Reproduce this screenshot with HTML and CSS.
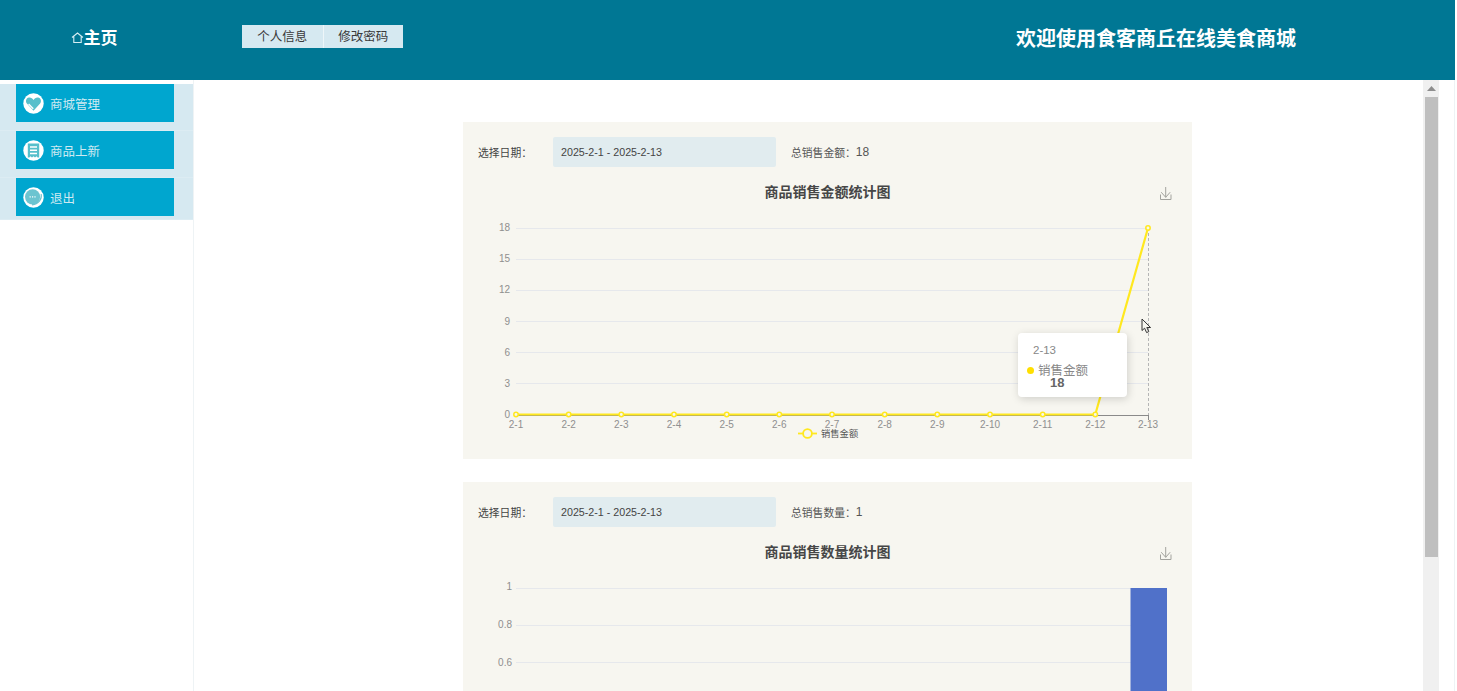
FILE: index.html
```html
<!DOCTYPE html>
<html lang="zh-CN">
<head>
<meta charset="utf-8">
<title>食客商丘在线美食商城</title>
<link rel="stylesheet" href="styles.css">
</head>
<body>
<div class="page">
  <header class="topbar">
    <div class="brand">
      <svg class="home-icon" width="13" height="13" viewBox="0 0 13 13"><path d="M1 6.5 6.5 2 12 6.5M2.8 5.6V11.5H10.2V5.6" fill="none" stroke="#d6eef4" stroke-width="1.1"/></svg>
      <span>主页</span>
    </div>
    <nav class="tabs">
      <a class="tab">个人信息</a>
      <a class="tab">修改密码</a>
    </nav>
    <h1 class="welcome">欢迎使用食客商丘在线美食商城</h1>
  </header>
  <div class="body-row">
    <aside class="sidebar">
      <ul class="menu">
        <li class="menu-row"><a class="menu-item">
          <svg class="menu-icon" width="21" height="21" viewBox="0 0 21 21"><circle cx="10.5" cy="10.5" r="10.2" fill="#fff"/><path d="M10.5 17.8 3.9 10.6C2.2 8.6 3 5 6 4.6 7.9 4.4 9.6 5.4 10.5 7 11.4 5.4 13.1 4.4 15 4.6 18 5 18.8 8.6 17.1 10.6Z" fill="#56bfcb"/><path d="M5.6 11 10.3 15.8" stroke="#fff" stroke-width="1.3"/></svg>
          <span>商城管理</span></a></li>
        <li class="menu-row"><a class="menu-item">
          <svg class="menu-icon" width="21" height="21" viewBox="0 0 21 21"><circle cx="10.5" cy="10.5" r="10.2" fill="#fff"/><path d="M4.8 3.6H16.2V17.4H14.6L13.6 16.2 12 17.4 10.5 16.2 9 17.4 7.4 16.2 6.4 17.4H4.8Z" fill="#56bfcb"/><path d="M7 7H14M7 10.2H14M7 13.4H14" stroke="#fff" stroke-width="1.5"/></svg>
          <span>商品上新</span></a></li>
        <li class="menu-row"><a class="menu-item">
          <svg class="menu-icon" width="21" height="21" viewBox="0 0 21 21"><circle cx="10.5" cy="10.5" r="10.2" fill="#fff"/><circle cx="9.6" cy="9.8" r="7.6" fill="#6cc4d0"/><path d="M18.2 7C19.2 12 15.6 17.2 9 17.9" fill="none" stroke="#6cc4d0" stroke-width="1.1"/><path d="M6.6 9.8H7.8M9 9.8H10.2M11.4 9.8H12.6" stroke="#fff" stroke-width="1.2"/></svg>
          <span>退出</span></a></li>
      </ul>
    </aside>
    <main class="content">
      <div class="scroll-area">
        <section class="card">
          <div class="filter">
            <label class="filter-label">选择日期：</label>
            <div class="date-input">2025-2-1 - 2025-2-13</div>
            <div class="total"><span>总销售金额：</span><b class="total-num">18</b></div>
          </div>
          <svg class="chart" width="729" height="284" viewBox="0 0 729 284">
            <text class="chart-title" x="364.5" y="22" text-anchor="middle">商品销售金额统计图</text>
            <path d="M702.7 12V22.3M698.2 17.2 702.7 22.3 707.2 17.2M697.5 19.5V24.5H708V19.5" fill="none" stroke="#a3a39e" stroke-width="1"/>
            <path d="M53 53.5H685M53 84.5H685M53 115.5H685M53 146.5H685M53 177.5H685M53 208.5H685" stroke="#e6e8ec" stroke-width="1"/>
            <g class="axis-y" text-anchor="end">
              <text x="47" y="56">18</text><text x="47" y="87">15</text><text x="47" y="118">12</text><text x="47" y="150">9</text><text x="47" y="181">6</text><text x="47" y="212">3</text><text x="47" y="243">0</text>
            </g>
            <path d="M53 240.5H685.5M685.5 240V245" stroke="#8a8a8a" fill="none"/>
            <path d="M685.5 53V240" stroke="#b5b5b5" stroke-dasharray="3 2" fill="none"/>
            <path d="M53 239.5H632.3L685 53" fill="none" stroke="#ffe81f" stroke-width="2.2"/>
            <g fill="#f6f6f0" stroke="#ffe81f" stroke-width="1.5">
              <circle cx="53" cy="239.5" r="2.2"/><circle cx="105.7" cy="239.5" r="2.2"/><circle cx="158.3" cy="239.5" r="2.2"/><circle cx="211" cy="239.5" r="2.2"/><circle cx="263.7" cy="239.5" r="2.2"/><circle cx="316.3" cy="239.5" r="2.2"/><circle cx="369" cy="239.5" r="2.2"/><circle cx="421.7" cy="239.5" r="2.2"/><circle cx="474.3" cy="239.5" r="2.2"/><circle cx="527" cy="239.5" r="2.2"/><circle cx="579.7" cy="239.5" r="2.2"/><circle cx="632.3" cy="239.5" r="2.2"/><circle cx="685" cy="53" r="2.2"/>
            </g>
            <g class="axis-x" text-anchor="middle">
              <text x="53" y="253">2-1</text><text x="105.7" y="253">2-2</text><text x="158.3" y="253">2-3</text><text x="211" y="253">2-4</text><text x="263.7" y="253">2-5</text><text x="316.3" y="253">2-6</text><text x="369" y="253">2-7</text><text x="421.7" y="253">2-8</text><text x="474.3" y="253">2-9</text><text x="527" y="253">2-10</text><text x="579.7" y="253">2-11</text><text x="632.3" y="253">2-12</text><text x="685" y="253">2-13</text>
            </g>
            <path d="M335 258.5H354" stroke="#ffe81f" stroke-width="1.8"/>
            <circle cx="344.5" cy="258.5" r="4.4" fill="#f6f6f0" stroke="#ffe81f" stroke-width="1.8"/>
            <text class="legend" x="358" y="262">销售金额</text>
          </svg>
          <div class="tooltip">
            <div class="tip-date">2-13</div>
            <div class="tip-row"><i class="tip-dot"></i><span>销售金额</span></div>
            <div class="tip-val">18</div>
          </div>
          <svg class="cursor" width="12" height="16" viewBox="0 0 12 16"><path d="M1 1V12.5L3.6 10.2 5.6 14.6 7.8 13.6 5.8 9.5H9.6Z" fill="#f6f6f0" stroke="#333" stroke-width="1"/></svg>
        </section>
        <section class="card">
          <div class="filter">
            <label class="filter-label">选择日期：</label>
            <div class="date-input">2025-2-1 - 2025-2-13</div>
            <div class="total"><span>总销售数量：</span><b class="total-num">1</b></div>
          </div>
          <svg class="chart" width="729" height="284" viewBox="0 0 729 284">
            <text class="chart-title" x="364.5" y="22" text-anchor="middle">商品销售数量统计图</text>
            <path d="M702.7 12V22.3M698.2 17.2 702.7 22.3 707.2 17.2M697.5 19.5V24.5H708V19.5" fill="none" stroke="#a3a39e" stroke-width="1"/>
            <path d="M53 53.5H668M53 90.5H668M53 127.5H668" stroke="#e6e8ec"/>
            <g class="axis-y" text-anchor="end">
              <text x="49" y="55">1</text><text x="49" y="93">0.8</text><text x="49" y="131">0.6</text>
            </g>
            <rect x="667.5" y="53" width="36.5" height="240" fill="#5071c9"/>
          </svg>
        </section>
      </div>
      <div class="scrollbar">
        <svg class="scroll-arrow" width="9" height="5" viewBox="0 0 9 5"><path d="M4.5 0 9 5H0Z" fill="#8e8e8e"/></svg>
        <div class="scroll-thumb"></div>
      </div>
      <div class="gutter"></div>
    </main>
  </div>
</div>
</body>
</html>
```
FILE: styles.css
```css
* { box-sizing: border-box; }
html, body { margin: 0; padding: 0; height: 100%; overflow: hidden; background: #fff; }
body { font-family: "Noto Sans CJK SC", "Liberation Sans", sans-serif; color: #333; }
ul { list-style: none; margin: 0; padding: 0; }
h1 { margin: 0; }

.page { width: 1457px; height: 691px; display: flex; flex-direction: column; padding-right: 2px; }

.topbar { height: 80px; flex: none; background: #007794; display: flex; align-items: flex-start; }
.brand { width: 193px; height: 80px; display: flex; align-items: center; justify-content: center; color: #fff; font-size: 17px; font-weight: 700; padding: 0 5px 7px 0; }
.home-icon { margin-top: 2px; }
.tabs { display: flex; margin: 25px 0 0 49px; }
.tab { width: 80.5px; height: 23px; background: #d6e9f1; color: #3a3a3a; font-size: 12.5px; line-height: 22px; text-align: center; }
.tab + .tab { border-left: 1px solid #eef6f9; }
.welcome { margin: 25px 0 0 auto; padding-right: 159px; color: #fff; font-size: 20px; line-height: 26px; font-weight: 700; }

.body-row { flex: 1; display: flex; min-height: 0; }

.sidebar { width: 194px; flex: none; border-right: 1px solid #eef3f5; padding-top: 4px; }
.menu { background: #d6e9f1; }
.menu-row { height: 47px; padding: 0 19px 0 16px; border-bottom: 1px solid #dcecf3; }
.menu-row:last-child { height: 42px; }
.menu-item { display: flex; align-items: center; gap: 6px; width: 158px; height: 38px; background: #00a6cf; color: #cfeaf2; font-size: 12.5px; padding-left: 7px; }
.menu-icon { flex: none; }

.content { flex: 1; display: flex; min-width: 0; }
.scroll-area { flex: 1; overflow: hidden; padding: 42px 0 0 269px; }

.card { position: relative; width: 729px; height: 337px; background: #f7f6f0; margin-bottom: 23px; }
.filter { height: 53px; padding: 15px 0 0 15px; display: flex; align-items: flex-start; font-size: 10.8px; color: #444; }
.filter-label { width: 75px; line-height: 30px; }
.date-input { width: 223px; height: 30px; background: #e1ecef; border-radius: 2px; padding-left: 8px; line-height: 30px; font-family: "Liberation Sans", sans-serif; font-size: 10.7px; color: #444; }
.total { margin-left: 15px; line-height: 30px; color: #555; font-size: 10.8px; display: flex; }
.total-num { font-weight: 400; font-size: 12px; font-family: "Liberation Sans", sans-serif; color: #555; }

.chart { display: block; overflow: hidden; }
.chart-title { font-size: 14px; font-weight: 700; fill: #464646; }
.axis-y text, .axis-x text { font-family: "Liberation Sans", sans-serif; font-size: 10px; fill: #8f8f8f; }
.legend { font-size: 9.3px; fill: #555; }

.tooltip { position: absolute; left: 555px; top: 211px; width: 109px; height: 64px; background: #fff; border-radius: 4px; box-shadow: 1px 2px 8px rgba(0, 0, 0, .16); color: #888; }
.tip-date { position: absolute; left: 15px; top: 10px; font-family: "Liberation Sans", sans-serif; font-size: 11.5px; line-height: 14px; }
.tip-row { position: absolute; left: 9px; top: 28px; display: flex; align-items: center; gap: 4px; font-size: 12.5px; line-height: 18px; }
.tip-dot { width: 7px; height: 7px; border-radius: 50%; background: #ffdf00; }
.tip-val { position: absolute; left: 32px; top: 42px; font-family: "Liberation Sans", sans-serif; font-size: 13px; line-height: 15px; font-weight: 700; color: #666; }
.cursor { position: absolute; left: 678px; top: 196px; }

.scrollbar { width: 16px; flex: none; background: #f0f0f0; padding: 6px 1px 0 2px; display: flex; flex-direction: column; align-items: center; }
.scroll-arrow { flex: none; }
.scroll-thumb { width: 13px; height: 460px; margin-top: 6px; background: #bfbfbf; }
.gutter { width: 16px; flex: none; border-right: 1px solid #eef3f5; }
```
